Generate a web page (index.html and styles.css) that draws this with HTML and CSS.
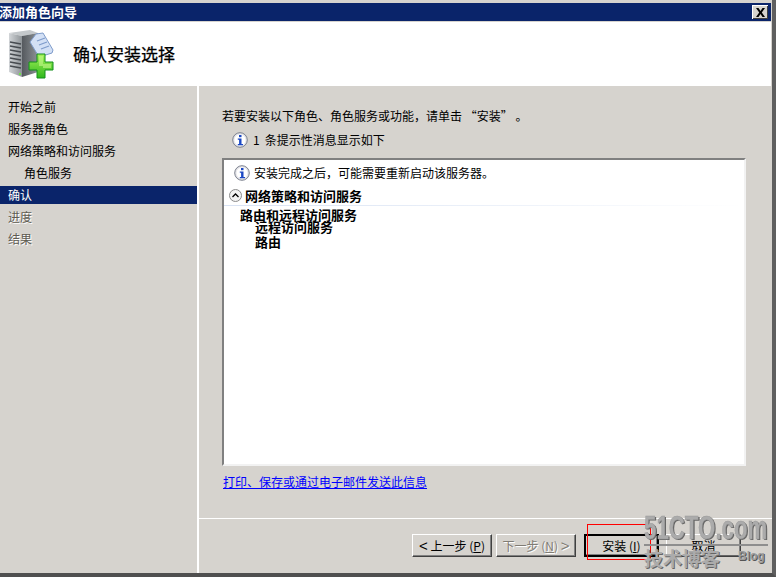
FILE: index.html
```html
<!DOCTYPE html>
<html lang="zh">
<head>
<meta charset="utf-8">
<title>添加角色向导</title>
<link rel="stylesheet" href="styles.css">
</head>
<body>
<div class="window">
  <div class="titlebar">
    <span class="title">添加角色向导</span>
    <span class="close"><svg width="11" height="9" viewBox="0 0 11 9"><path d="M1 0h2.500L5.500 3 7.500 0H10L6.800 4.500 10 9H7.500L5.500 6 3.500 9H1L4.200 4.500z" fill="#000"/></svg></span>
  </div>
  <header class="header">
    <svg class="logo" width="46" height="49" viewBox="0 0 46 49">
      <defs>
        <linearGradient id="side" x1="0" x2="1" y1="0" y2="0"><stop offset="0" stop-color="#55595e"/><stop offset="1" stop-color="#8d9296"/></linearGradient>
        <linearGradient id="front" x1="0" x2="1" y1="0" y2="0"><stop offset="0" stop-color="#d2d5d8"/><stop offset="1" stop-color="#8f9498"/></linearGradient>
        <linearGradient id="plus" x1="0" x2="0" y1="0" y2="1"><stop offset="0" stop-color="#a6f25a"/><stop offset="1" stop-color="#2fb81c"/></linearGradient>
      </defs>
      <path d="M1 3 L22 0 L30 3 L14 6z" fill="#c4c8cb"/>
      <path d="M1 3 L14 6 V47 L1 42z" fill="url(#front)"/>
      <path d="M14 6 L30 3 V42 L14 47z" fill="url(#side)"/>
      <path d="M2 12l11 2M2 16l11 2M2 20l11 2M2 24l11 2M2 28l11 2M2 32l11 2M2 36l11 2" stroke="#474b50" stroke-width="1.500"/>
      <rect x="11" y="43" width="2" height="2" fill="#6fe34a"/>
      <path d="M22 12 L28 4 L35 3 L45 20 L44 23 L31 27 Z" fill="#d3e0f5" stroke="#7f9ccb"/>
      <path d="M29 11l8-3M31 15l8-3M33 19l8-3" stroke="#7f9ccb" stroke-width="1.300"/>
      <path d="M29 24h8v8h8v8h-8v8h-8v-8h-8v-8h8z" fill="url(#plus)" stroke="#12901a"/>
      <path d="M31 26h4v8h8v4h-8v-2h-4z" fill="#c4f98a" opacity=".6"/>
    </svg>
    <h1 class="heading">确认安装选择</h1>
  </header>
  <div class="body">
    <nav class="sidebar">
      <div class="step">开始之前</div>
      <div class="step">服务器角色</div>
      <div class="step">网络策略和访问服务</div>
      <div class="step sub">角色服务</div>
      <div class="step current">确认</div>
      <div class="step off">进度</div>
      <div class="step off">结果</div>
    </nav>
    <main class="main">
      <div class="content">
        <p class="lead">若要安装以下角色、角色服务或功能，请单击 “安装” 。</p>
        <div class="notice">
          <svg class="info" width="16" height="16" viewBox="0 0 16 16"><circle cx="8" cy="8" r="7.300" fill="#e6e6ea" stroke="#7d828f"/><circle cx="8" cy="8" r="5.500" fill="#fff"/><rect x="7" y="3" width="2.500" height="2.200" fill="#1a47c4"/><path d="M5.800 6.500h3.700v5.500H11v1.300H5.800V12h1.300V7.800H5.800z" fill="#1a47c4"/></svg>
          <span class="num">1</span><span>条提示性消息显示如下</span>
        </div>
        <div class="box">
          <div class="box-note">
            <svg class="info" width="16" height="16" viewBox="0 0 16 16"><circle cx="8" cy="8" r="7.300" fill="#e6e6ea" stroke="#7d828f"/><circle cx="8" cy="8" r="5.500" fill="#fff"/><rect x="7" y="3" width="2.500" height="2.200" fill="#1a47c4"/><path d="M5.800 6.500h3.700v5.500H11v1.300H5.800V12h1.300V7.800H5.800z" fill="#1a47c4"/></svg>
            <span>安装完成之后，可能需要重新启动该服务器。</span>
          </div>
          <div class="section">
            <svg class="chev" width="13" height="13" viewBox="0 0 13 13"><circle cx="6.500" cy="6.500" r="6" fill="#f2f2f2" stroke="#8c8c8c"/><path d="M3.500 8 L6.500 5 L9.500 8" fill="none" stroke="#000" stroke-width="1.300"/></svg>
            <span>网络策略和访问服务</span>
          </div>
          <div class="tree t1">路由和远程访问服务</div>
          <div class="tree t2 tight">远程访问服务</div>
          <div class="tree t2">路由</div>
        </div>
        <a class="link" href="#">打印、保存或通过电子邮件发送此信息</a>
      </div>
      <footer class="footer">
        <button class="btn" type="button"><span class="arrow">&lt;</span> 上一步 (<u>P</u>)</button>
        <button class="btn off" type="button">下一步 (<u>N</u>) <span class="arrow">&gt;</span></button>
        <button class="btn primary" type="button">安装 (<u>I</u>)</button>
        <button class="btn cancel" type="button">取消</button>
      </footer>
    </main>
  </div>
</div>
<div class="redmark"></div>
<div class="watermark">
  <div class="wm-main">51CTO.com</div>
  <div class="wm-rule"></div>
  <div class="wm-sub"><span>技术博客</span><i></i><b>Blog</b></div>
</div>
</body>
</html>
```
FILE: styles.css
```css
* { box-sizing: border-box; }
html, body { margin: 0; padding: 0; }
body {
  width: 776px; height: 577px; overflow: hidden; position: relative;
  background: #d6d3ce;
  font: 12px/16px "Noto Sans CJK SC", "Liberation Sans", sans-serif;
  color: #000;
}
.window {
  width: 776px; height: 577px;
  padding: 3px 0 0 0;
  background: #d6d3ce;
  border-right: 4px solid #5f5f5f;
  border-bottom: 4px solid #4f4f4f;
  display: flex; flex-direction: column;
}
.titlebar {
  height: 18px; background: #0a246a; color: #fff; margin-right: 1px;
  display: flex; align-items: center; justify-content: space-between;
  flex: none;
}
.title { font-size: 13px; font-weight: 700; line-height: 18px; margin-left: -1px; }
.close {
  width: 16px; height: 14px; margin-right: 3px;
  background: #d6d3ce; display: flex; align-items: center; justify-content: center;
  box-shadow: inset 1px 1px 0 #fff, inset -1px -1px 0 #404040;
}
.header {
  height: 64px; flex: none; background: #fff; margin-right: 1px; margin-top: 1px;
  display: flex; align-items: center; padding-left: 8px;
}
.logo { flex: none; margin-top: 1px; }
.heading { margin: 0 0 0 19px; font-size: 17px; font-weight: 400; line-height: 20px; -webkit-text-stroke: .25px #000; }
.body { flex: 1; display: flex; min-height: 0; }
.sidebar {
  width: 199px; flex: none; padding-top: 10px;
  border-right: 2px solid #fff;
}
.step { height: 22px; padding: 3px 0 3px 8px; line-height: 16px; }
.step.sub { padding-left: 24px; }
.step.current { background: #0a246a; color: #fff; height: 18px; margin: 2px 0; padding-top: 1px; }
.step.off { color: #5f5c52; text-shadow: 1px 1px 0 #fff; }
.main { flex: 1; display: flex; flex-direction: column; min-width: 0; }
.content { height: 433px; flex: none; padding: 22px 0 0 23px; border-bottom: 1px solid #fff; }
.lead { margin: 0; line-height: 16px; }
.notice { display: flex; align-items: center; height: 16px; margin: 8px 0 0 10px; gap: 5px; }
.box {
  width: 524px; height: 308px; margin-top: 10px; background: #fff;
  border: 2px solid; border-color: #808080 #f2f2f2 #f2f2f2 #808080;
  padding: 5px 0 0 0;
}
.box-note { display: flex; align-items: center; height: 16px; gap: 4px; padding-left: 10px; }
.section {
  display: flex; align-items: center; gap: 3px; height: 20px; margin-top: 5px; padding-left: 5px;
  border-bottom: 1px solid; border-image: linear-gradient(to right, #d8e2f3, #fff) 1;
  font-weight: 700; font-size: 13px;
}
.tree { font-weight: 700; font-size: 13px; line-height: 16px; height: 15px; }
.t1 { padding-left: 16px; margin-top: 1px; }
.t2 { padding-left: 31px; }
.tight { margin-top: -3px; }
.link { display: inline-block; margin: 8px 0 0 1px; color: #0000ff; line-height: 16px; }
.footer { flex: 1; display: flex; align-items: flex-start; padding: 15px 0 0 213px; }
.btn {
  width: 80px; height: 23px; padding: 0; margin: 0 4px 0 0;
  background: #d6d3ce; color: #000; font: inherit; line-height: 16px;
  border: 1px solid; border-color: #fff #404040 #404040 #fff;
  box-shadow: inset -1px -1px 0 #808080;
}
.btn.off { color: #807c74; text-shadow: 1px 1px 0 #fff; }
.btn.primary { width: 75px; margin: 0 7px 0 4px; border: 2px solid #000; }
.btn.cancel { width: 75px; margin: 0; }
.arrow { font-family: "Liberation Sans", sans-serif; font-size: 15px; line-height: 14px; }
.redmark {
  position: absolute; left: 587px; top: 524px; width: 64px; height: 36px;
  border: 1px solid #f00;
}
.watermark {
  position: absolute; left: 644px; top: 511px; width: 124px; color: #ababab;
  font-family: "Liberation Sans", sans-serif;
}
.wm-main {
  font-size: 34px; line-height: 32px; font-weight: 700; white-space: nowrap;
  width: 190px; transform: scaleX(.655); transform-origin: left top;
  -webkit-text-stroke: .5px #9a9a9a; text-shadow: 2px 1px 0 #666;
}
.wm-rule { height: 2px; background: #8e8e8e; margin-top: 1px; }
.wm-sub { display: flex; align-items: center; height: 22px; margin-top: 1px; }
.wm-sub span { font: 700 19px/22px "Noto Sans CJK SC", sans-serif; text-shadow: 1px 1px 0 #666; width: 76px; flex: none; }
.wm-sub i { display: block; width: 18px; height: 1px; background: #666; margin-top: -6px; flex: none; }
.wm-sub b { font-size: 12px; color: #9c9c9c; text-shadow: 1px 1px 0 #555; margin-top: -4px; white-space: nowrap; }
```
